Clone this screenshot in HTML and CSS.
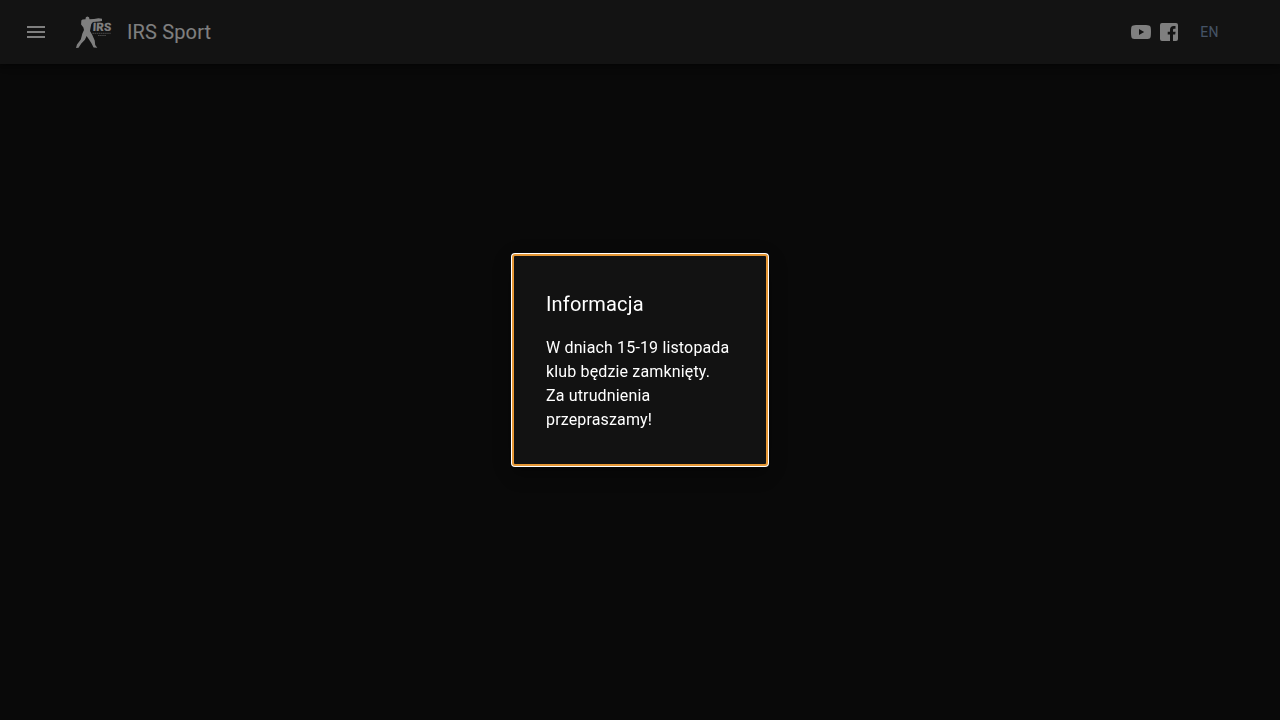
FILE: index.html
```html
<!DOCTYPE html>
<html lang="pl">
<head>
<meta charset="utf-8">
<title>IRS Sport</title>
<link rel="stylesheet" href="styles.css">
</head>
<body>
<header class="app-bar">
  <button class="menu-button" aria-label="Menu"><svg class="icon" viewBox="0 0 24 24"><path d="M3 18h18v-2H3v2zm0-5h18v-2H3v2zm0-7v2h18V6H3z"/></svg></button>
  <svg class="logo" viewBox="0 0 40 40" role="img" aria-label="IRS Sport">
    <path d="M13.600 6L14 5.200L15.200 4.500L17 5.200L17.500 7.200L22 7L26.500 6.300L30 6.800L30 9L27 9.600L21 10L19.300 12L18.500 16L18 19L20.300 23L22.700 28.500L23.200 33L25.300 35.700L21.600 35.500L19.300 31L16.700 27L14.600 24L12.900 27.700L9.300 31.500L6.500 35.700L4 36L5 32.500L8.800 27.500L10.400 21.500L12 18L11.400 15.500L9.100 12.500L9.300 8.500L10.500 7.500L13.600 7.200Z"/>
    <text class="logo-name" transform="translate(20.400 19.400) skewX(-3)" textLength="18.700" lengthAdjust="spacingAndGlyphs">IRS</text>
    <path class="logo-lines" d="M20.500 21.300H38.700M26 23.500H34"/>
  </svg>
  <div class="brand">IRS Sport</div>
  <nav class="links">
    <a class="social"><svg class="icon" viewBox="0 0 24 24"><path fill-rule="evenodd" d="M12 5c8.400 0 9.200.2 9.700 2.600.4 2.100.4 6.700 0 8.800-.5 2.400-1.300 2.600-9.700 2.600s-9.200-.2-9.700-2.600c-.4-2.100-.4-6.700 0-8.800C2.800 5.200 3.600 5 12 5zM10 9v6l5.200-3z"/></svg></a>
    <a class="social"><svg class="icon" viewBox="0 0 24 24"><path d="M5 3h14a2 2 0 0 1 2 2v14a2 2 0 0 1-2 2h-3v-6.500h2.200l.4-2.700H16v-1.500c0-1.100.5-1.500 1.500-1.500h1V6h-1.800c-2.300 0-3.700 1.400-3.700 3.700v2.100h-2.300v2.700H13V21H5a2 2 0 0 1-2-2V5a2 2 0 0 1 2-2z"/></svg></a>
    <a class="language">EN</a>
  </nav>
</header>
<div class="overlay">
  <section class="dialog" role="dialog" aria-labelledby="dialog-title">
    <h2 class="dialog-title" id="dialog-title">Informacja</h2>
    <p class="dialog-text">W dniach 15-19 listopada klub będzie zamknięty.<br>Za utrudnienia przepraszamy!</p>
  </section>
</div>
</body>
</html>
```
FILE: styles.css
```css
* { box-sizing: border-box; }
body {
  margin: 0;
  height: 100vh;
  overflow: hidden;
  background: #121212;
  color: #fff;
  font-family: Roboto, sans-serif;
}
.app-bar {
  display: flex;
  align-items: center;
  height: 64px;
  padding: 0 61px 0 24px;
  background: #272727;
  box-shadow: 0 2px 4px -1px rgba(0,0,0,.2), 0 4px 5px rgba(0,0,0,.14), 0 1px 10px rgba(0,0,0,.12);
}
.menu-button {
  display: flex;
  padding: 0;
  border: 0;
  background: none;
  color: inherit;
}
.icon {
  display: block;
  width: 24px;
  height: 24px;
  fill: currentColor;
}
.logo {
  width: 40px;
  height: 40px;
  margin-left: 24px;
  fill: #fff;
}
.logo-name {
  font: 900 11.500px Roboto, sans-serif;
}
.logo-lines {
  stroke: #aaa;
  stroke-width: .8;
  stroke-dasharray: 1.600 .5;
}
.brand {
  margin-left: 15px;
  font-size: 20px;
  line-height: 32px;
  letter-spacing: .0075em;
}
.links {
  display: flex;
  align-items: center;
  margin-left: auto;
}
.social { margin-right: 4px; }
.language {
  margin-left: 15px;
  color: #8ba6cc;
  font-size: 14px;
  line-height: 24px;
  letter-spacing: .02857em;
}
.overlay {
  position: fixed;
  inset: 0;
  display: flex;
  align-items: center;
  justify-content: center;
  background: rgba(0,0,0,.5);
}
.dialog {
  width: 256px;
  padding: 32px;
  border: 2px solid #e59735;
  border-radius: 3px;
  background: #121212;
  box-shadow: 0 0 0 1px #fff, 0 7px 8px -4px rgba(0,0,0,.2), 0 12px 17px 2px rgba(0,0,0,.14), 0 5px 22px 4px rgba(0,0,0,.12);
}
.dialog-title {
  margin: 0;
  font-size: 20px;
  font-weight: 400;
  line-height: 32px;
  letter-spacing: .0075em;
}
.dialog-text {
  margin: 16px 0 0;
  font-size: 16px;
  line-height: 24px;
  letter-spacing: .00938em;
}
```
